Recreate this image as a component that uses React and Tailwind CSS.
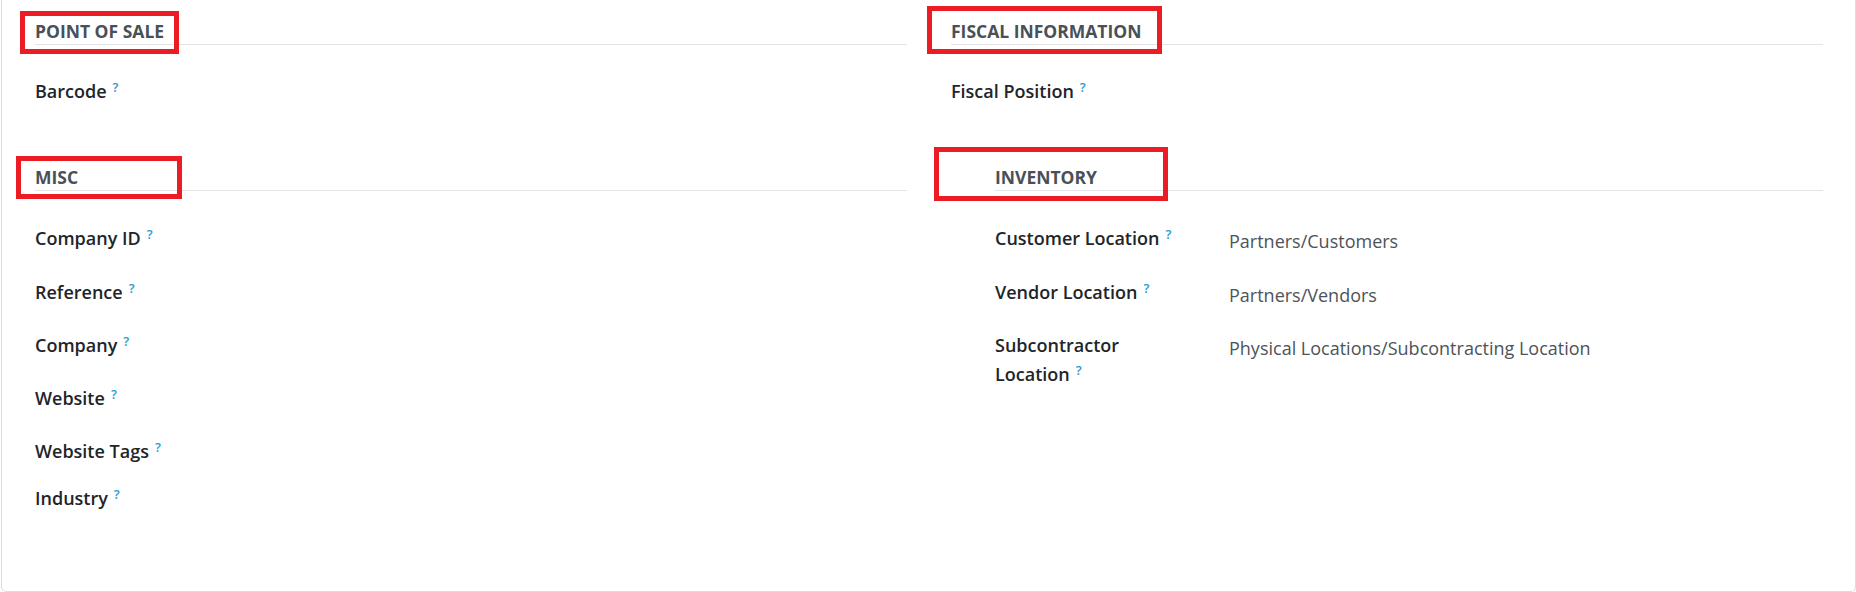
import React from "react";

const Help = () => (
  <span className="relative top-[4px] ml-[6px] align-top text-[13px] font-semibold leading-none text-[#2b9bd1]">
    ?
  </span>
);

function Title({ children }) {
  return (
    <div className="border-b border-[#e2e4e7] text-[17.5px] font-bold leading-[26px] text-[#495057]">
      {children}
    </div>
  );
}

function Field({ label, value, className = "" }) {
  return (
    <div className={"flex items-start " + className}>
      <div className="w-[234px] shrink-0 pr-[36px] font-semibold leading-[29px] text-[#212529]">
        {label}
        <Help />
      </div>
      {value && (
        <div className="pt-[3px] leading-[29px] text-[#4d5358]">{value}</div>
      )}
    </div>
  );
}

function Mark({ className }) {
  return (
    <div
      className={"pointer-events-none absolute border-[5px] border-[#ec1c24] " + className}
    ></div>
  );
}

export default function App() {
  return (
    <div className="relative h-[592px] w-[1856px] bg-white font-['Open_Sans',sans-serif] text-[18px]">
      <div className="ml-px h-[592px] w-[1855px] rounded-b-[5px] border-x border-b border-[#d9dce0] pl-[33px] pr-[32px] pt-[18px]">
        <div className="grid grid-cols-2 gap-x-[44px]">
          {/* Point of sale */}
          <div className="h-[146px]">
            <Title>POINT OF SALE</Title>
            <Field label="Barcode" className="mt-[32px]" />
          </div>

          {/* Fiscal information */}
          <div className="h-[146px]">
            <Title>FISCAL INFORMATION</Title>
            <Field label="Fiscal Position" className="mt-[32px]" />
          </div>

          {/* Misc */}
          <div>
            <Title>MISC</Title>
            <div className="mt-[33px]">
              <Field label="Company ID" className="h-[54px]" />
              <Field label="Reference" className="h-[53px]" />
              <Field label="Company" className="h-[53px]" />
              <Field label="Website" className="h-[53px]" />
              <Field label="Website Tags" className="h-[47px]" />
              <Field label="Industry" />
            </div>
          </div>

          {/* Inventory */}
          <div className="ml-[44px]">
            <Title>INVENTORY</Title>
            <div className="mt-[33px]">
              <Field
                label="Customer Location"
                value="Partners/Customers"
                className="h-[54px]"
              />
              <Field
                label="Vendor Location"
                value="Partners/Vendors"
                className="h-[53px]"
              />
              <Field
                label="Subcontractor Location"
                value="Physical Locations/Subcontracting Location"
              />
            </div>
          </div>
        </div>
      </div>

      {/* annotation boxes */}
      <Mark className="left-[20px] top-[11px] h-[43px] w-[159px]" />
      <Mark className="left-[927px] top-[6px] h-[48px] w-[235px]" />
      <Mark className="left-[16px] top-[156px] h-[43px] w-[166px]" />
      <Mark className="left-[934px] top-[147px] h-[54px] w-[234px]" />
    </div>
  );
}
